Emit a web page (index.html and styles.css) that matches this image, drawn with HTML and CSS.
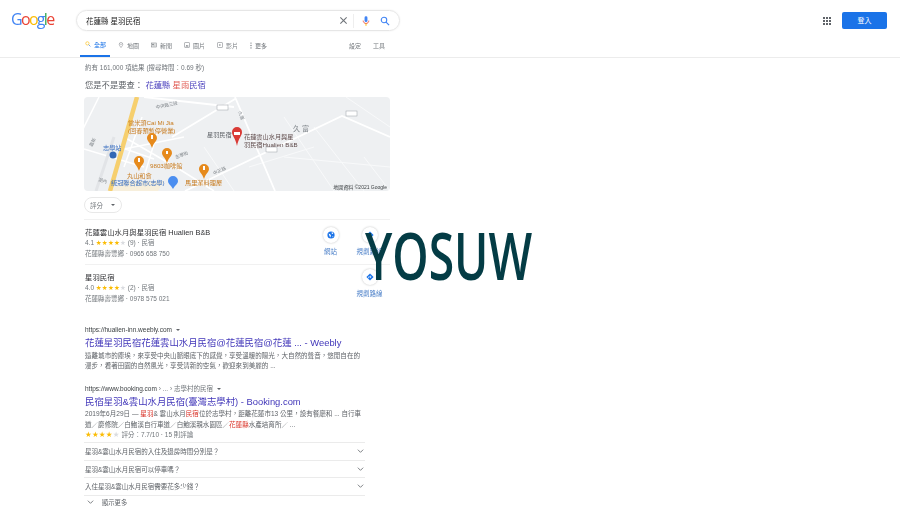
FILE: index.html
```html
<!DOCTYPE html>
<html lang="zh-Hant">
<head>
    <meta charset="UTF-8">
    <title>花蓮縣 星羽民宿 - Google 搜尋</title>
    <link rel="stylesheet" href="styles.css">
</head>
<body>
    <div class="page">
        <!-- Header -->
        <div class="topbar">
            <div class="logo"><span class="c-blue">G</span><span class="c-red">o</span><span class="c-yellow">o</span><span class="c-blue">g</span><span class="c-green">l</span><span class="c-red">e</span></div>
            <div class="searchbox">
                <span class="query">花蓮縣 星羽民宿</span>
                <svg class="clear-icon" viewBox="0 0 10 10"><path d="M1.5 1.5l7 7M8.5 1.5l-7 7" stroke="#70757a" stroke-width="1.2"/></svg>
                <span class="divider"></span>
                <svg class="mic-icon" viewBox="0 0 10 14"><rect x="3.2" y="1" width="3.6" height="7.4" rx="1.8" fill="#4285f4"/><path d="M1.5 6.5c0 2.2 1.5 3.6 3.5 3.6s3.500-1.400 3.500-3.600" fill="none" stroke="#ea4335" stroke-width="1"/><rect x="4.400" y="10" width="1.200" height="3" fill="#fbbc04"/></svg>
                <svg class="search-icon" viewBox="0 0 12 12"><circle cx="4.800" cy="4.800" r="3.300" fill="none" stroke="#4285f4" stroke-width="1.300"/><path d="M7.300 7.300l3.600 3.600" stroke="#4285f4" stroke-width="1.500"/></svg>
            </div>
            <div class="topbar-right">
                <svg class="apps-icon" viewBox="0 0 8 8" fill="#5f6368"><rect width="2" height="2"/><rect x="3" width="2" height="2"/><rect x="6" width="2" height="2"/><rect y="3" width="2" height="2"/><rect x="3" y="3" width="2" height="2"/><rect x="6" y="3" width="2" height="2"/><rect y="6" width="2" height="2"/><rect x="3" y="6" width="2" height="2"/><rect x="6" y="6" width="2" height="2"/></svg>
                <div class="signin">登入</div>
            </div>
        </div>

        <!-- Tabs -->
        <div class="tabs">
            <div class="tab active">
                <svg class="tab-icon" viewBox="0 0 12 12"><circle cx="4.800" cy="4.800" r="3.300" fill="none" stroke="#fbbc04" stroke-width="1.200"/><path d="M7.300 7.300l3.600 3.600" stroke="#4285f4" stroke-width="1.400"/></svg>
                全部
            </div>
            <div class="tab">
                <svg class="tab-icon" viewBox="0 0 12 12"><path d="M6 11C3.800 8 2.500 6.400 2.500 4.500a3.500 3.500 0 0 1 7 0C9.500 6.400 8.200 8 6 11z" fill="none" stroke="#70757a"/><circle cx="6" cy="4.500" r="1" fill="#70757a"/></svg>
                地圖
            </div>
            <div class="tab">
                <svg class="tab-icon" viewBox="0 0 12 12"><rect x="1" y="2" width="10" height="8" fill="none" stroke="#70757a"/><rect x="2.500" y="3.500" width="3" height="3" fill="#70757a"/><path d="M6.500 4h3M6.500 6h3M2.500 8h7" stroke="#70757a" stroke-width=".7"/></svg>
                新聞
            </div>
            <div class="tab">
                <svg class="tab-icon" viewBox="0 0 12 12"><rect x="1.500" y="1.500" width="9" height="9" fill="none" stroke="#70757a"/><path d="M3 9l2-3 1.500 1.500L8 6l1 3z" fill="#70757a"/></svg>
                圖片
            </div>
            <div class="tab">
                <svg class="tab-icon" viewBox="0 0 12 12"><rect x="1.500" y="1.500" width="9" height="9" fill="none" stroke="#70757a"/><path d="M4.800 4v4l3.200-2z" fill="#70757a"/></svg>
                影片
            </div>
            <div class="tab tab-more">
                <svg class="more-icon" viewBox="0 0 2 10" fill="#70757a"><circle cx="1" cy="1.500" r=".9"/><circle cx="1" cy="5" r=".9"/><circle cx="1" cy="8.500" r=".9"/></svg>
                更多
            </div>
            <div class="tab tab-tools">設定</div>
            <div class="tab">工具</div>
        </div>

        <!-- Results -->
        <div class="results">
            <div class="stats">約有 161,000 項結果 (搜尋時間：0.69 秒)</div>
            <div class="didyoumean">您是不是要查： <span class="link">花蓮縣 <span class="hl">星雨</span>民宿</span></div>

            <div class="map">
                <svg viewBox="0 0 306 94" width="306" height="94">
                    <rect width="306" height="94" fill="#eef0f2"/>
                    <!-- faint side streets -->
                    <path d="M200 60L306 70M230 30L280 94M262 0L306 30M200 20L250 94M120 50L150 94M165 70L230 50M280 60L306 94" stroke="#f8f9fa" stroke-width="1" fill="none"/>
                    <path d="M60 70L0 52M40 40L95 72L130 94M15 0L-4 38M30 48L70 62M58 20L40 70M75 30L60 80M40 52L100 40" stroke="#fff" stroke-width="1.500" fill="none"/>
                    <path d="M151 0L191 94M101 94L258 19L306 40M88 40L151 2M60 0L150 10" stroke="#fff" stroke-width="1.800" fill="none"/>
                    <path d="M30 40L12 94" stroke="#e2e4e7" stroke-width="3" fill="none"/>
                    <path d="M26 94h48l6-10H40z" fill="#f7efdc"/>
                    <path d="M53 0L26 94" stroke="#f6cf6e" stroke-width="4.500" fill="none"/>
                    <g class="map-street">
                        <text transform="translate(72 12) rotate(-12)">中央路三段</text>
                        <text transform="translate(154 15) rotate(68)">久富</text>
                        <text transform="translate(8 50) rotate(-62)">嘉新</text>
                        <text transform="translate(14 84) rotate(15)">湖內</text>
                        <text transform="translate(92 62) rotate(-22)">志學街</text>
                        <text transform="translate(130 78) rotate(-25)">中正路</text>
                    </g>
                    <g class="map-road">
                        <rect x="133" y="8" width="11" height="5"/><rect x="262" y="14" width="11" height="5"/><rect x="182" y="50" width="11" height="5"/>
                    </g>
                    <g class="map-orange">
                        <text x="44" y="28">當米頭Cai Mi Jia</text>
                        <text x="44" y="36">(回春預暫停營業)</text>
                        <text x="66" y="71">9803咖啡館</text>
                        <text x="43" y="81">丸山和食</text>
                        <text x="101" y="88">馬里潔料理屋</text>
                    </g>
                    <g class="map-blue">
                        <text x="19" y="53">志學站</text>
                        <text x="27" y="88">統冠聯合超市(志學)</text>
                    </g>
                    <g class="map-gray">
                        <text x="123" y="40">星羽民宿</text>
                        <text class="map-area" x="209" y="34">久 富</text>
                    </g>
                    <g class="map-red">
                        <text x="160" y="42">花蓮雲山水月與星</text>
                        <text x="160" y="50">羽民宿Hualien B&amp;B</text>
                    </g>
                    <path d="M148 35a5 5 0 0 1 10 0c0 4-3.500 6-5 14c-1.500-8-5-10-5-14z" fill="#d93a35"/>
                    <path d="M150 35h6v3h-6z" fill="#fff"/>
                    <g fill="#e68a1c">
                        <path d="M63 41a5 5 0 0 1 10 0c0 3-3 4-5 10c-2-6-5-7-5-10z"/>
                        <path d="M78 56a5 5 0 0 1 10 0c0 3-3 4-5 10c-2-6-5-7-5-10z"/>
                        <path d="M50 64a5 5 0 0 1 10 0c0 3-3 4-5 10c-2-6-5-7-5-10z"/>
                        <path d="M115 72a5 5 0 0 1 10 0c0 3-3 4-5 10c-2-6-5-7-5-10z"/>
                    </g>
                    <g fill="#fff">
                        <rect x="67" y="38" width="2" height="4"/><rect x="82" y="54" width="2" height="3"/><rect x="54" y="61" width="2" height="4"/><rect x="119" y="69" width="2" height="4"/>
                    </g>
                    <path d="M84 84a5 5 0 0 1 10 0c0 3-3 4-5 8c-2-4-5-5-5-8z" fill="#4b8ef0"/>
                    <circle cx="29" cy="58" r="3.500" fill="#3367b5"/>
                    <text class="map-credit" x="303" y="92" text-anchor="end">地圖資料 ©2021 Google</text>
                </svg>
            </div>

            <div class="chip">評分 <span class="caret"></span></div>

            <div class="places">
                <div class="place">
                    <div class="place-info">
                        <div class="place-name">花蓮雲山水月與星羽民宿 Hualien B&amp;B</div>
                        <div class="meta">4.1 <span class="stars">★★★★<span class="star-off">★</span></span> (9) · 民宿</div>
                        <div class="meta">花蓮縣壽豐鄉 · 0965 658 750</div>
                    </div>
                    <div class="action">
                        <span class="action-circle"><svg viewBox="0 0 10 10"><circle cx="5" cy="5" r="4.500" fill="#1a73e8"/><path d="M2 3l2 1 1 2-1 2-1-2zM6 1l2 2-2 1zM7 6l1 1-1 1z" fill="#fff"/></svg></span>
                        <span class="action-label">網站</span>
                    </div>
                    <div class="action">
                        <span class="action-circle"><svg viewBox="0 0 10 10"><path d="M5 .5L9.500 5 5 9.500.5 5z" fill="#1a73e8"/><path d="M3.200 6.500V4.800h2.800M5 3.500L6.500 4.800 5 6.100" fill="none" stroke="#fff" stroke-width=".8"/></svg></span>
                        <span class="action-label">規劃路線</span>
                    </div>
                </div>
                <div class="place">
                    <div class="place-info">
                        <div class="place-name">星羽民宿</div>
                        <div class="meta">4.0 <span class="stars">★★★★<span class="star-off">★</span></span> (2) · 民宿</div>
                        <div class="meta">花蓮縣壽豐鄉 · 0978 575 021</div>
                    </div>
                    <div class="action action-only">
                        <span class="action-circle"><svg viewBox="0 0 10 10"><path d="M5 .5L9.500 5 5 9.500.5 5z" fill="#1a73e8"/><path d="M3.200 6.500V4.800h2.800M5 3.500L6.500 4.800 5 6.100" fill="none" stroke="#fff" stroke-width=".8"/></svg></span>
                        <span class="action-label">規劃路線</span>
                    </div>
                </div>
            </div>

            <div class="result first">
                <div class="url">https://hualien-inn.weebly.com <span class="caret small"></span></div>
                <div class="title">花蓮星羽民宿花蓮雲山水月民宿@花蓮民宿@花蓮 ... - Weebly</div>
                <div class="snippet">遠離城市的塵埃，來享受中央山脈眼底下的感覺，享受溫暖的陽光，大自然的聲音，悠閒自在的<br>漫步，看著田園的自然風光，享受清新的空氣，歡迎來到美麗的 ...</div>
            </div>

            <div class="result second">
                <div class="url">https://www.booking.com<span class="crumbs"> › ... › 志學村的民宿</span> <span class="caret small"></span></div>
                <div class="title">民宿星羽&amp;雲山水月民宿(臺灣志學村) - Booking.com</div>
                <div class="snippet">2019年6月29日 — <span class="hl">星羽</span>&amp; 雲山水月<span class="hl">民宿</span>位於志學村，距離花蓮市13 公里，設有餐廳和 ... 自行車<br>道／慶修院／白鮑溪自行車道／白鮑溪親水園區／<span class="hl">花蓮縣</span>水產培育所／ ...</div>
                <div class="meta review"><span class="stars">★★★★<span class="star-off">★</span></span> 評分：7.7/10 · 15 則評論</div>
            </div>

            <div class="faq">
                <div class="faq-row">星羽&amp;雲山水月民宿的入住及退房時間分別是？<svg class="chev" viewBox="0 0 10 6"><path d="M1 1l4 4 4-4" fill="none" stroke="#5f6368" stroke-width="1.200"/></svg></div>
                <div class="faq-row">星羽&amp;雲山水月民宿可以停車嗎？<svg class="chev" viewBox="0 0 10 6"><path d="M1 1l4 4 4-4" fill="none" stroke="#5f6368" stroke-width="1.200"/></svg></div>
                <div class="faq-row">入住星羽&amp;雲山水月民宿需要花多少錢？<svg class="chev" viewBox="0 0 10 6"><path d="M1 1l4 4 4-4" fill="none" stroke="#5f6368" stroke-width="1.200"/></svg></div>
            </div>
            <div class="show-more"><svg class="chev" viewBox="0 0 10 6"><path d="M1 1l4 4 4-4" fill="none" stroke="#5f6368" stroke-width="1.200"/></svg>顯示更多</div>
        </div>

        <!-- Watermark over the page -->
        <div class="watermark">YOSUW</div>
    </div>
</body>
</html>
```

FILE: styles.css
```css
html, body {
    margin: 0;
    background-color: #fff;
}

body {
    font-family: 'Liberation Sans', 'Noto Sans CJK TC', sans-serif;
    color: #4d5156;
    overflow: hidden;
}

.page {
    position: relative;
    width: 900px;
    height: 506px;
    overflow: hidden;
    filter: blur(0.3px);
}

/* Header */
.topbar {
    display: flex;
    align-items: flex-start;
    padding: 10px 13px 0 11px;
    height: 21px;
}

.logo {
    width: 65px;
    font-family: 'Open Sans', sans-serif;
    font-size: 16px;
    line-height: 19px;
    letter-spacing: -1.700px;
}

.c-blue { color: #4285f4; }
.c-red { color: #ea4335; }
.c-yellow { color: #fbbc05; }
.c-green { color: #34a853; }

.searchbox {
    display: flex;
    align-items: center;
    box-sizing: border-box;
    width: 324px;
    height: 21px;
    padding: 0 9px 0 9px;
    border: 1px solid #e6e6e6;
    border-radius: 11px;
    box-shadow: 0 0 2px rgba(32, 33, 36, 0.08);
}

.query {
    flex: 1;
    font-size: 7.500px;
    color: #222;
}

.clear-icon {
    width: 9px;
    height: 9px;
}

.divider {
    width: 1px;
    height: 14px;
    margin: 0 8px 0 5px;
    background-color: #eee;
}

.mic-icon {
    width: 8px;
    height: 12px;
}

.search-icon {
    width: 10px;
    height: 10px;
    margin-left: 10px;
}

.topbar-right {
    display: flex;
    align-items: center;
    margin-left: auto;
    padding-top: 2px;
}

.apps-icon {
    width: 8px;
    height: 8px;
    margin-right: 11px;
}

.signin {
    width: 45px;
    height: 17px;
    border-radius: 2px;
    background-color: #1a73e8;
    color: #fff;
    font-size: 7px;
    line-height: 17px;
    text-align: center;
}

/* Tabs */
.tabs {
    display: flex;
    height: 26px;
    padding-left: 80px;
    border-bottom: 1px solid #ececec;
}

.tab {
    display: flex;
    align-items: center;
    gap: 3px;
    height: 26px;
    padding: 2px 1px 0;
    margin-right: 10px;
    box-sizing: border-box;
    font-size: 6px;
    color: #70757a;
}

.tab.active {
    padding: 2px 4px 0 5px;
    margin-right: 7px;
    color: #1a73e8;
    border-bottom: 2px solid #1a73e8;
}

.tab-icon {
    width: 6px;
    height: 6px;
}

.more-icon {
    width: 2px;
    height: 7px;
}

.tab-tools {
    margin-left: 70px;
}

/* Results column */
.results {
    width: 305px;
    padding-left: 85px;
}

.stats {
    margin-top: 6px;
    font-size: 6.500px;
    line-height: 8px;
    color: #70757a;
}

.didyoumean {
    margin-top: 7px;
    font-size: 8.300px;
    line-height: 12px;
    color: #5f6368;
}

.link {
    color: #1a0dab;
    opacity: 0.8;
}

.hl {
    color: #d93025;
}

.map {
    width: 306px;
    height: 94px;
    margin: 6px 0 0 -1px;
    border-radius: 4px;
    overflow: hidden;
}

.map svg {
    display: block;
}

.map text {
    font-family: 'Liberation Sans', 'Noto Sans CJK TC', sans-serif;
    font-size: 6.200px;
}

.map-orange { fill: #c77a1d; }
.map-blue { fill: #3a6fc0; }
.map-gray { fill: #5f6368; }
.map-red { fill: #5f4b4b; }
.map-road rect { fill: #fff; stroke: #9aa0a6; stroke-width: 0.5px; }
.map text.map-area { font-size: 7px; fill: #80868b; }
.map .map-street text { font-size: 4.500px; fill: #80868b; }
.map text.map-credit { font-size: 5px; fill: #3c4043; }

.chip {
    display: flex;
    align-items: center;
    gap: 8px;
    box-sizing: border-box;
    width: 38px;
    height: 16px;
    margin: 6px 0 0 -1px;
    padding-left: 5px;
    border: 1px solid #e8e8e8;
    border-radius: 8px;
    font-size: 6.500px;
    color: #70757a;
}

.caret {
    display: inline-block;
    width: 0;
    height: 0;
    border-left: 2px solid transparent;
    border-right: 2px solid transparent;
    border-top: 2.500px solid #5f6368;
    vertical-align: middle;
}

/* Place list */
.places {
    margin: 6px 0 0 -1px;
    padding-left: 1px;
    border-top: 1px solid #f1f1f1;
}

.place {
    display: flex;
    height: 45px;
    box-sizing: border-box;
    padding: 7px 1px 0 0;
    border-bottom: 1px solid #f1f1f1;
}

.place:last-child {
    border-bottom: 0;
}

.place-info {
    flex: 1;
}

.place-name {
    font-size: 7.400px;
    line-height: 11px;
    color: #303134;
}

.meta {
    font-size: 6.500px;
    line-height: 10.500px;
    color: #70757a;
}

.stars {
    color: #fbbc04;
    letter-spacing: 0.2px;
    font-family: 'DejaVu Sans', sans-serif;
}

.star-off {
    color: #dadce0;
}

.action {
    display: flex;
    flex-direction: column;
    align-items: center;
    width: 39px;
}

.action-only {
    margin-top: -3px;
}

.action-circle {
    display: flex;
    align-items: center;
    justify-content: center;
    width: 16px;
    height: 16px;
    border-radius: 50%;
    box-shadow: 0 0 2px rgba(60, 64, 67, 0.35);
}

.action-circle svg {
    width: 8px;
    height: 8px;
}

.action-label {
    margin-top: 5px;
    font-size: 6.500px;
    line-height: 8px;
    color: #4a7fc8;
}

/* Organic results */
.result.first {
    margin-top: 15px;
}

.result.second {
    margin-top: 12px;
}

.url {
    font-size: 6.500px;
    line-height: 10px;
    color: #3c4043;
}

.crumbs {
    color: #70757a;
}

.caret.small {
    margin-left: 2px;
}

.title {
    margin-top: 1px;
    font-size: 9.400px;
    line-height: 13px;
    color: #1a0dab;
    opacity: 0.85;
    white-space: nowrap;
}

.snippet {
    margin-top: 1.500px;
    font-size: 6.550px;
    line-height: 10.500px;
    color: #5f6368;
    white-space: nowrap;
}

.review {
    line-height: 9px;
}

.review .stars {
    font-size: 7.500px;
}

/* Questions */
.faq {
    width: 281px;
    margin: 3px 0 0 -1px;
}

.faq-row {
    display: flex;
    align-items: center;
    justify-content: space-between;
    height: 16.500px;
    padding: 0 1px;
    border-top: 1px solid #ebebeb;
    font-size: 6.500px;
    color: #5f6368;
}

.faq-row:last-child {
    border-bottom: 1px solid #ebebeb;
}

.chev {
    width: 7px;
    height: 4px;
}

.show-more {
    display: flex;
    align-items: center;
    gap: 8px;
    margin-top: 2px;
    padding-left: 2px;
    font-size: 6.300px;
    line-height: 9px;
    color: #5f6368;
}

/* Watermark */
.watermark {
    position: absolute;
    left: 365px;
    top: 210px;
    font-family: 'Open Sans', sans-serif;
    font-size: 66px;
    font-weight: 600;
    line-height: 88px;
    color: #043c45;
    transform: scaleX(0.7);
    transform-origin: left top;
}
```
